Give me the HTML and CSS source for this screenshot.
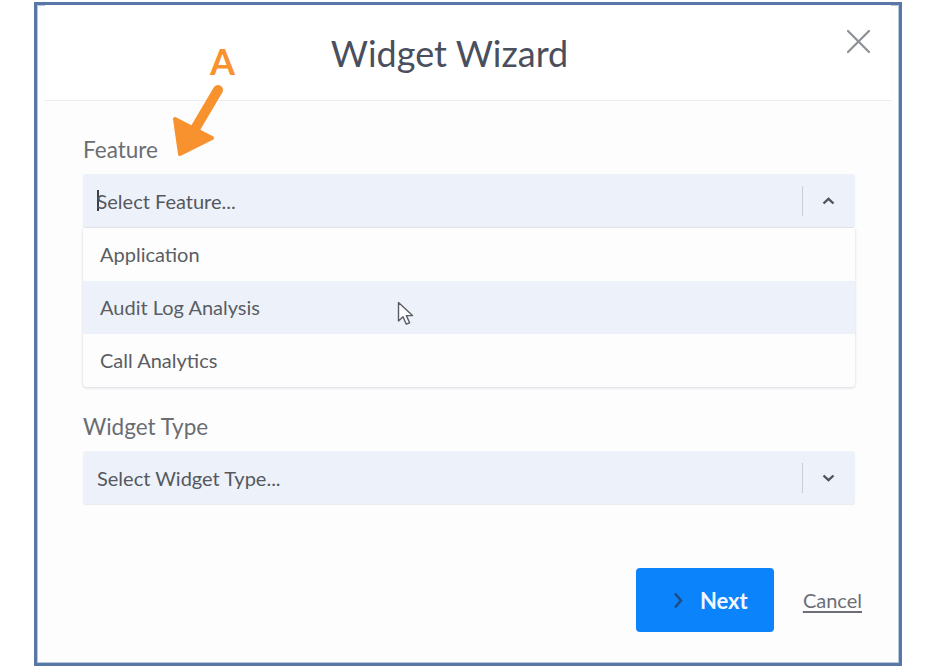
FILE: index.html
```html
<!DOCTYPE html>
<html lang="en">
<head>
<meta charset="utf-8">
<title>Widget Wizard</title>
<link rel="stylesheet" href="styles.css">
</head>
<body>
<div class="frame">
  <header class="header">
    <h1 class="title">Widget Wizard</h1>
    <button class="close" aria-label="Close">
      <svg width="25" height="25" viewBox="0 0 25 25"><path d="M2 2 L23 23 M23 2 L2 23" stroke="#8d9097" stroke-width="2.2" fill="none" stroke-linecap="round"/></svg>
    </button>
  </header>
  <main class="body">
    <label class="label">Feature</label>
    <div class="select">
      <span class="caret"></span><span class="placeholder">Select Feature...</span>
      <span class="sep"></span>
      <svg class="chev" width="13" height="8" viewBox="0 0 13 8"><path d="M1.5 6.5 L6.5 1.8 L11.5 6.5" stroke="#4f535a" stroke-width="2.4" fill="none"/></svg>
    </div>
    <ul class="menu">
      <li class="option">Application</li>
      <li class="option active">Audit Log Analysis</li>
      <li class="option">Call Analytics</li>
    </ul>
    <label class="label label2">Widget Type</label>
    <div class="select">
      <span class="placeholder">Select Widget Type...</span>
      <span class="sep"></span>
      <svg class="chev" width="13" height="8" viewBox="0 0 13 8"><path d="M1.5 1.5 L6.5 6.2 L11.5 1.5" stroke="#4f535a" stroke-width="2.4" fill="none"/></svg>
    </div>
  </main>
  <footer class="footer">
    <button class="next">
      <svg width="10" height="17" viewBox="0 0 10 17"><path d="M2 1.5 L8 8.5 L2 15.5" stroke="#1c4d86" stroke-width="2.6" fill="none"/></svg>
      <span>Next</span>
    </button>
    <a class="cancel" href="#">Cancel</a>
  </footer>
</div>

<div class="annot-letter">A</div>
<svg class="annot-arrow" width="90" height="90" viewBox="160 80 90 90">
  <line x1="218" y1="90" x2="192" y2="134" stroke="#f7922f" stroke-width="10" stroke-linecap="round"/>
  <path d="M175 119 L212 138 L180 154 Z" fill="#f7922f" stroke="#f7922f" stroke-width="4" stroke-linejoin="round"/>
</svg>
<svg class="cursor" width="20" height="28" viewBox="0 0 20 28">
  <path d="M1.5 1.5 L1.5 20 L6 15.8 L9.3 23.2 L12.6 21.8 L9.4 14.6 L15.5 14.6 Z" fill="#fbfcfe" stroke="#5a5d63" stroke-width="1.4" stroke-linejoin="round"/>
</svg>
</body>
</html>
```

FILE: styles.css
```css
html, body {
  margin: 0;
  padding: 0;
  background: #ffffff;
}
body {
  position: relative;
  width: 936px;
  height: 667px;
  overflow: hidden;
  font-family: Lato, "Open Sans", "Liberation Sans", sans-serif;
}
.frame {
  box-sizing: border-box;
  margin: 2px 0 0 34px;
  width: 868px;
  height: 664px;
  border: 3px solid #5877a6;
  box-shadow: inset 0 0 0 1px #b8c6da;
  background: #fdfdfe;
  display: flex;
  flex-direction: column;
}
.header {
  box-sizing: border-box;
  height: 96px;
  margin: 0 8px;
  padding: 24px 20px 0 0;
  border-bottom: 1px solid #ecedef;
  display: flex;
  align-items: flex-start;
  background: #ffffff;
}
.title {
  flex: 1;
  margin: 0;
  padding-left: 8px;
  text-align: center;
  font-size: 36px;
  line-height: 48px;
  font-weight: 400;
  color: #4a4f5d;
}
.close {
  margin-top: 0;
  padding: 0;
  border: 0;
  background: none;
  width: 25px;
  height: 25px;
  display: block;
}
.body {
  padding: 37px 44px 0 46px;
  display: flex;
  flex-direction: column;
}
.label {
  display: block;
  font-size: 22.5px;
  line-height: 24px;
  color: #6a6d72;
  margin-bottom: 12px;
}
.label2 {
  margin-top: 28px;
}
.select {
  box-sizing: border-box;
  height: 53px;
  background: #edf2fa;
  border-radius: 3px;
  box-shadow: 0 1px 1px rgba(60, 70, 90, 0.10);
  display: flex;
  align-items: center;
  padding: 0 20px 0 14px;
}
.caret {
  width: 1.5px;
  height: 21px;
  background: #3c3f45;
  margin-right: -2px;
}
.placeholder {
  flex: 1;
  font-size: 20px;
  color: #55585e;
}
.sep {
  width: 1px;
  height: 30px;
  background: #c9ced6;
  margin-right: 19px;
}
.chev {
  display: block;
}
.menu {
  list-style: none;
  margin: 1px 0 0;
  padding: 0;
  background: #fdfdfd;
  border-radius: 0 0 4px 4px;
  box-shadow: 0 1px 3px rgba(60, 70, 90, 0.18), 0 0 1px rgba(60, 70, 90, 0.12);
}
.option {
  height: 53px;
  line-height: 53px;
  padding-left: 17px;
  font-size: 20px;
  color: #5a5d63;
}
.option.active {
  background: #edf2fa;
}
.footer {
  margin-top: 64px;
  padding-right: 37px;
  display: flex;
  justify-content: flex-end;
  align-items: center;
  gap: 29px;
}
.next {
  box-sizing: border-box;
  width: 138px;
  height: 64px;
  border: 0;
  border-radius: 4px;
  background: #0b84fb;
  display: flex;
  align-items: center;
  gap: 17px;
  padding: 0 0 0 37px;
  font-family: Lato, "Open Sans", "Liberation Sans", sans-serif;
  font-size: 22px;
  font-weight: 700;
  color: #f2f7ff;
}
.next svg {
  display: block;
}
.cancel {
  font-size: 20px;
  color: #6c6f75;
  text-decoration: underline;
  text-underline-offset: 3px;
}
.annot-letter {
  position: absolute;
  left: 210px;
  top: 43px;
  font-size: 36px;
  line-height: 36px;
  font-weight: 700;
  color: #f7922f;
}
.annot-arrow {
  position: absolute;
  left: 160px;
  top: 80px;
}
.cursor {
  position: absolute;
  left: 397px;
  top: 301px;
}
```
